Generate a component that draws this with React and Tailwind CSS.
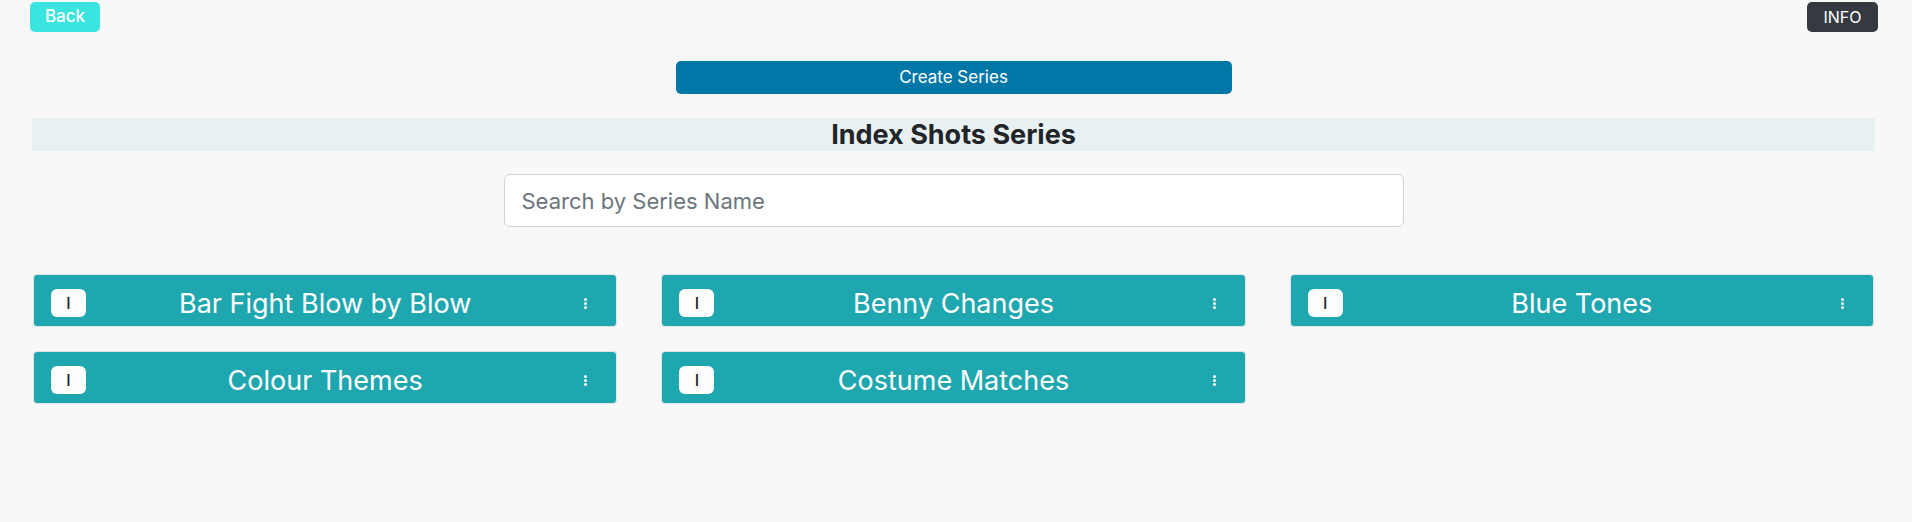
import React from 'react';

const series = [
    'Bar Fight Blow by Blow',
    'Benny Changes',
    'Blue Tones',
    'Colour Themes',
    'Costume Matches',
];

function SeriesCard({ name }) {
    return (
        <div className="rounded-[4px] border border-[#e2e5e8] bg-[#1fa7b0]">
            <div className="grid grid-cols-[1fr_auto_1fr] items-center px-[17px] pt-[14px] pb-[9px]">
                <button className="justify-self-start w-[35px] h-[28px] rounded-[6px] bg-[#fdfdfd] text-[#212529] text-[16px] font-medium leading-none">
                    I
                </button>
                <h3 className="text-white text-[27px] leading-none whitespace-nowrap">{name}</h3>
                <div className="justify-self-end mr-[12px] flex flex-col gap-[1px]">
                    <span className="block w-[3px] h-[3px] rounded-full bg-white"></span>
                    <span className="block w-[3px] h-[3px] rounded-full bg-white"></span>
                    <span className="block w-[3px] h-[3px] rounded-full bg-white"></span>
                </div>
            </div>
        </div>
    );
}

export default function App() {
    return (
        <div
            className="min-h-screen bg-[#f8f8f8] pt-[2px]"
            style={{ fontFamily: 'Inter, "Noto Sans", sans-serif' }}
        >
            {/* Top bar */}
            <div className="flex items-center justify-between pl-[30px] pr-[34px]">
                <button className="h-[30px] w-[70px] rounded-[5px] bg-[#3ae5df] text-white text-[17px] font-medium">
                    Back
                </button>
                <button className="h-[30px] w-[71px] rounded-[5px] bg-[#343a40] text-white text-[16px]">
                    INFO
                </button>
            </div>

            <div className="pl-[32px] pr-[37px]">
                <div className="mt-[29px] flex justify-center">
                    <button className="h-[33px] w-[556px] rounded-[5px] bg-[#0077a7] text-white text-[17px]">
                        Create Series
                    </button>
                </div>

                <div className="mt-[24px] h-[33px] bg-[#e9f0f2] flex items-center justify-center">
                    <h2 className="text-[27px] font-bold text-[#212529] leading-none">Index Shots Series</h2>
                </div>

                <div className="mt-[23px] flex justify-center">
                    <input
                        type="text"
                        placeholder="Search by Series Name"
                        className="h-[53px] w-[900px] rounded-[6px] border border-[#ced4da] bg-white px-[17px] text-[22px] text-[#212529] placeholder:text-[#6c757d] outline-none"
                    />
                </div>

                <div className="mt-[47px] grid grid-cols-3 gap-x-[44px] gap-y-[24px] px-[1px]">
                    {series.map(name => (
                        <SeriesCard key={name} name={name} />
                    ))}
                </div>
            </div>
        </div>
    );
}
